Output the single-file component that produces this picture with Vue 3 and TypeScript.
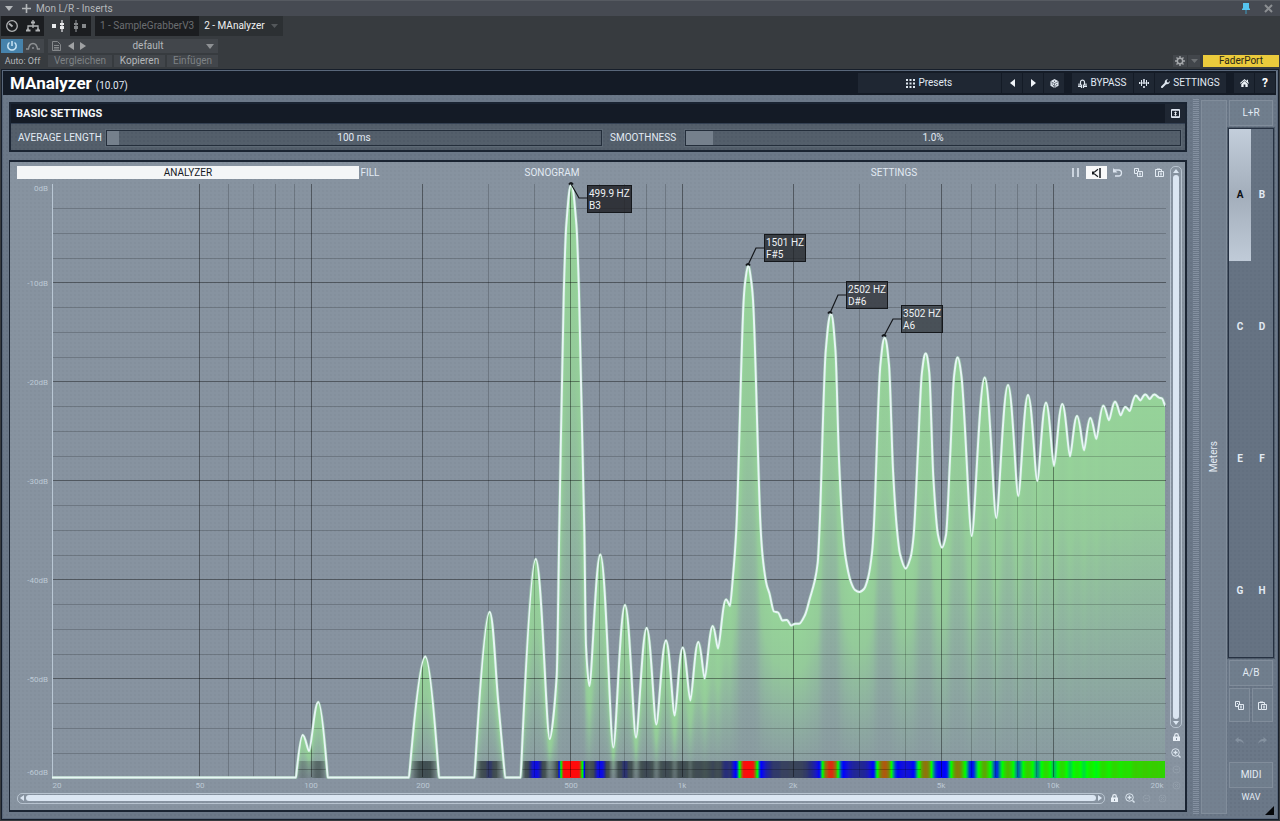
<script setup lang="ts">
import { ref } from 'vue'

type Point = [number, number]

const LEFT = 52
const TOP = 184
const WIDTH = 1114
const HEIGHT = 594
const BOTTOM = TOP + HEIGHT
const FLOOR = 777.5

const tabNames = ['ANALYZER', 'SONOGRAM', 'SETTINGS']
const activeTab = ref('ANALYZER')
const banks = ['A', 'B', 'C', 'D', 'E', 'F', 'G', 'H']
const activeBank = ref('A')
const preset = ref('default')

const sliders = ref([
  { id: 'avg', label: 'AVERAGE LENGTH', text: '100 ms', value: 24, fill: 24 },
  { id: 'smooth', label: 'SMOOTHNESS', text: '1.0%', value: 54, fill: 54 },
])

const xOf = (hz: number) => 311 + Math.log10(hz / 100) * 371.2
const yOf = (db: number) => TOP - db * 9.9
const pctX = (x: number) => ((x - LEFT) / WIDTH) * 100 + '%'
const pctY = (y: number) => ((y - TOP) / HEIGHT) * 100 + '%'

const majorHz = [50, 100, 200, 500, 1000, 2000, 5000, 10000]
const minorHz = [60, 70, 80, 90, 300, 400, 600, 700, 800, 900, 3000, 4000, 6000, 7000, 8000, 9000]
const majorDb = [-10, -20, -30, -40, -50]
const minorDb: number[] = []
for (let d = -2.5; d > -60; d -= 2.5) if (d % 10 !== 0) minorDb.push(d)
const lineX = (hz: number) => Math.floor(xOf(hz)) + 0.5

const hzLabels = [
  { x: 57, text: '20' }, { x: 200, text: '50' }, { x: 311, text: '100' }, { x: 423, text: '200' },
  { x: 571, text: '500' }, { x: 682, text: '1k' }, { x: 793, text: '2k' }, { x: 941, text: '5k' },
  { x: 1053, text: '10k' }, { x: 1157, text: '20k' },
]
const dbLabels = [
  { y: 189, text: '0dB' }, { y: 284, text: '-10dB' }, { y: 383, text: '-20dB' }, { y: 482, text: '-30dB' },
  { y: 581, text: '-40dB' }, { y: 680, text: '-50dB' }, { y: 773, text: '-60dB' },
]

const callouts = [
  { x: 587, y: 185, hz: '499.9 HZ', note: 'B3', line: 'M571 184L579 198H587', alpha: 0.82 },
  { x: 764, y: 234, hz: '1501 HZ', note: 'F#5', line: 'M748 265L756 248H764', alpha: 0.74 },
  { x: 846, y: 281, hz: '2502 HZ', note: 'D#6', line: 'M830 313L838 295H846', alpha: 0.66 },
  { x: 901, y: 305, hz: '3502 HZ', note: 'A6', line: 'M884 336L893 319H901', alpha: 0.58 },
]

const spectrum: Point[] = [
  [52, FLOOR], [296, FLOOR], [302.7, 735], [309, 751], [318.3, 702], [327.7, FLOOR],
  [409, FLOOR], [425.3, 656.5], [439, FLOOR], [474.5, FLOOR], [489.6, 612], [498.3, 703], [505, FLOOR],
  [520.7, FLOOR], [535.7, 559], [549.7, 739], [556.7, 676], [559.3, 530], [563.8, 293], [566.3, 225], [571.2, 185],
  [576.4, 225], [579, 293], [584.3, 530], [586, 646], [589.3, 686], [600.3, 554.5], [613.3, 747.5], [625, 605],
  [636, 737.5], [646.7, 628], [656.3, 724.5], [666, 640.5], [674.7, 715.5], [682.7, 647.5],
  [690.3, 700.5], [698.3, 642], [704.7, 678.5], [712.7, 626], [718, 648.5], [726, 599.5], [730, 606],
  [732.7, 580], [736.3, 530], [743.7, 300], [745.3, 281], [748.3, 266], [751.2, 281], [753, 300],
  [760.7, 530], [763.3, 563],
  [766.7, 585], [769.3, 593], [774, 611.5], [778, 612.5], [782.3, 620.5], [786.7, 620], [791, 625.5],
  [795.3, 623.8], [799, 623.7], [805, 615], [810, 598], [814.7, 581], [817.7, 563], [819.5, 530],
  [825.8, 350], [831, 314], [835.4, 350], [839, 460], [842.7, 530], [845.5, 557], [850.7, 581.5],
  [855, 590], [859.3, 592], [864, 589], [868.3, 577], [872, 553], [873.7, 530], [880.4, 365], [884.7, 338],
  [889, 365], [893, 470], [897, 530], [900, 554], [905.7, 568.5], [910.7, 557], [913.7, 535],
  [918, 450], [922, 372], [925.7, 353.5], [929.2, 372], [933.3, 477], [938, 535], [942, 547.5], [946, 535],
  [950, 460], [954.2, 375], [957.7, 357.5], [961.3, 375],
  [971.7, 536], [984.7, 377.5], [996.3, 518], [1008, 385], [1018.3, 496], [1028, 395],
  [1037.3, 481], [1046, 402.7], [1054, 466], [1062.3, 404], [1070, 456.3], [1077, 416], [1084, 450.3],
  [1090.3, 418], [1096.3, 439], [1103.3, 405.7], [1109, 420.3], [1115, 401.7], [1120.7, 415.3],
  [1125.3, 407], [1129.7, 411], [1135.7, 395.5], [1140.3, 400.5], [1145.3, 394.5], [1149.7, 399],
  [1154.3, 394.5], [1159, 397.7], [1162, 398.5], [1165, 405.5],
]

/* Horizontal tangents at the extrema, harmonic-mean slopes elsewhere. */
function tangents(pts: Point[]): { slope: number; reach: number }[] {
  return pts.map((p, i) => {
    const a = pts[i - 1]
    const b = pts[i + 1]
    if (!a || !b) return { slope: 0, reach: 0.1 }
    const s1 = (p[1] - a[1]) / (p[0] - a[0])
    const s2 = (b[1] - p[1]) / (b[0] - p[0])
    if (s1 * s2 > 0) return { slope: (2 * s1 * s2) / (s1 + s2), reach: 0.33 }
    if (p[1] >= FLOOR) return { slope: 0, reach: 0.02 }
    return { slope: 0, reach: s2 > 0 ? 0.42 : 0.24 }
  })
}

const marks = tangents(spectrum)
let curve = `M${spectrum[0][0]} ${spectrum[0][1]}`
const samples: Point[] = [spectrum[0]]
for (let i = 1; i < spectrum.length; i++) {
  const [x0, y0] = spectrum[i - 1]
  const [x3, y3] = spectrum[i]
  const dx = x3 - x0
  const h0 = dx * marks[i - 1].reach
  const h3 = dx * marks[i].reach
  const x1 = x0 + h0
  const y1 = y0 + h0 * marks[i - 1].slope
  const x2 = x3 - h3
  const y2 = y3 - h3 * marks[i].slope
  curve += `C${x1.toFixed(2)} ${y1.toFixed(2)} ${x2.toFixed(2)} ${y2.toFixed(2)} ${x3} ${y3}`
  for (let k = 1; k <= 30; k++) {
    const t = k / 30
    const u = 1 - t
    const w = [u * u * u, 3 * u * u * t, 3 * u * t * t, t * t * t]
    samples.push([w[0] * x0 + w[1] * x1 + w[2] * x2 + w[3] * x3, w[0] * y0 + w[1] * y1 + w[2] * y2 + w[3] * y3])
  }
}

function levelAt(x: number, from: number): { y: number; at: number } {
  let i = from
  while (i < samples.length - 2 && samples[i + 1][0] < x) i++
  const a = samples[i]
  const b = samples[i + 1]
  const t = b[0] === a[0] ? 0 : Math.min(1, (x - a[0]) / (b[0] - a[0]))
  return { y: a[1] + (b[1] - a[1]) * t, at: i }
}

const heat: [number, number, number, number, number][] = [
  [-60, 60, 70, 70, 0], [-56, 55, 65, 65, 0.3], [-50, 45, 58, 58, 0.75], [-45, 48, 58, 70, 0.85],
  [-42, 34, 40, 120, 0.95], [-39, 20, 20, 210, 1], [-36, 0, 0, 255, 1], [-33, 0, 60, 210, 1],
  [-30, 0, 150, 130, 1], [-27, 0, 220, 60, 1], [-25, 0, 255, 0, 1], [-21, 60, 200, 0, 1],
  [-18, 125, 130, 10, 1], [-15, 185, 80, 15, 1], [-12, 240, 20, 15, 1], [-8, 255, 10, 10, 1], [1, 255, 10, 10, 1],
]
function heatColor(db: number): string {
  let i = 0
  while (i < heat.length - 2 && heat[i + 1][0] < db) i++
  const a = heat[i]
  const b = heat[i + 1]
  const t = Math.max(0, Math.min(1, (db - a[0]) / (b[0] - a[0])))
  const m = (k: number) => a[k] + (b[k] - a[k]) * t
  return `rgba(${Math.round(m(1))},${Math.round(m(2))},${Math.round(m(3))},${m(4).toFixed(2)})`
}

const columns: { x: number; y: number; h: number; color: string }[] = []
let cursor = 0
for (let x = LEFT; x < 1165; x++) {
  const hit = levelAt(x + 0.5, cursor)
  cursor = hit.at
  if (hit.y < FLOOR - 1) {
    columns.push({ x, y: hit.y, h: BOTTOM - hit.y, color: heatColor((TOP - hit.y) / 9.9) })
  }
}
</script>

<template>
  <div class="window">
    <header class="host">
      <div class="titlebar">
        <svg class="t-arrow" width="8" height="5" viewBox="0 0 8 5"><path d="M0 0h8L4 5z" fill="#b4b7ba" /></svg>
        <svg width="9" height="9" viewBox="0 0 9 9"><path d="M4.500 0v9M0 4.500h9" stroke="#b4b7ba" stroke-width="1.600" /></svg>
        <span class="title">Mon L/R - Inserts</span>
        <svg class="pin" width="8" height="11" viewBox="0 0 8 11"><path d="M1 0h6v5l1 1v1H0V6l1-1z" fill="#55c3ee" /><path d="M4 7v4" stroke="#3f8fb0" stroke-width="1.200" /></svg>
        <button class="plain" aria-label="Close"><svg width="9" height="9" viewBox="0 0 9 9"><path d="M1 1l7 7M8 1L1 8" stroke="#8b8e92" stroke-width="2" /></svg></button>
      </div>
      <div class="row row1">
        <div class="pair dark">
          <button aria-label="Automation"><svg width="14" height="14" viewBox="0 0 14 14" fill="none" stroke="#b0b2b4" stroke-width="1.300"><circle cx="7" cy="7" r="5.300" /><path d="M7.500 7.500L4 4.500" stroke-width="2" /></svg></button>
          <button aria-label="Routing"><svg width="16" height="14" viewBox="0 0 16 14" fill="none" stroke="#b0b2b4" stroke-width="1.300"><path d="M8 1v6M3 11V7h10v4M8 7v2" /><path d="M6 3.500h4M1 11.500h4.500M10.500 11.500H15M3 9.500v3M13 9.500v3" stroke-width="1.800" /></svg></button>
        </div>
        <div class="pair">
          <button aria-label="Pre fader"><svg width="14" height="12" viewBox="0 0 14 12" fill="#e8eaec"><path d="M0 4h4v4H0zM8 3h4v2H8zM8 6h4v3H8z" /><path d="M10 0v12" stroke="#e8eaec" stroke-width="1.200" /></svg></button>
          <button class="dark" aria-label="Post fader"><svg width="14" height="12" viewBox="0 0 14 12" fill="#85888b"><path d="M9 4h4v4H9zM1 3h4v2H1zM1 6h4v3H1z" /><path d="M3 0v12" stroke="#85888b" stroke-width="1.200" /></svg></button>
        </div>
        <nav class="chain">
          <button class="chain-tab off">1 - SampleGrabberV3</button>
          <button class="chain-tab on">2 - MAnalyzer<svg width="7" height="4" viewBox="0 0 7 4"><path d="M0 0h7L3.500 4z" fill="#54585b" /></svg></button>
        </nav>
      </div>
      <div class="row row2">
        <div class="pair">
          <button class="power" aria-label="Activate"><svg width="12" height="12" viewBox="0 0 12 12" fill="none" stroke="#c9e4f4" stroke-width="1.500"><path d="M3.500 2.500a4.200 4.200 0 1 0 5 0M6 1v5" /></svg></button>
          <button class="soft" aria-label="Bypass curve"><svg width="14" height="8" viewBox="0 0 14 8" fill="none" stroke="#8e9194" stroke-width="1.400"><path d="M0 7h2.500C3 3 5 1.500 7 1.500S11 3 11.500 7H14" /><circle cx="7" cy="6" r="1" fill="#8e9194" stroke="none" /></svg></button>
        </div>
        <div class="preset">
          <button class="soft file" aria-label="Preset file"><svg width="9" height="10" viewBox="0 0 9 10" fill="none" stroke="#85888b"><path d="M.5.5h5l3 3v6h-8zM2 4.500h5M2 6.500h5M2 8h5" /></svg></button>
          <button class="soft arrows" aria-label="Previous and next preset"><svg width="18" height="8" viewBox="0 0 18 8" fill="#a0a2a4"><path d="M6 0v8L0 4zM12 0v8l6-4z" /></svg></button>
          <div class="pick">
            <select v-model="preset" aria-label="Preset"><option>default</option></select>
            <svg width="8" height="5" viewBox="0 0 8 5"><path d="M0 0h8L4 5z" fill="#8e9194" /></svg>
          </div>
        </div>
      </div>
      <div class="row row3">
        <button class="auto">Auto: Off</button>
        <div class="preset edit">
          <button class="soft dim">Vergleichen</button>
          <button class="soft">Kopieren</button>
          <button class="soft dim">Einfügen</button>
        </div>
        <div class="fader">
          <button class="soft gear" aria-label="Options"><svg width="10" height="10" viewBox="0 0 10 10" fill="none" stroke="#a4a7aa"><circle cx="5" cy="5" r="2.700" stroke-width="1.500" /><path d="M5 0v2M5 8v2M0 5h2M8 5h2M1.500 1.500l1.300 1.300M7.200 7.200l1.300 1.300M8.500 1.500L7.200 2.800M2.800 7.200L1.500 8.500" stroke-width="1.400" /></svg></button>
          <button class="soft more" aria-label="More"><svg width="7" height="4" viewBox="0 0 7 4"><path d="M0 0h7L3.500 4z" fill="#6b6f72" /></svg></button>
          <button class="port">FaderPort</button>
        </div>
      </div>
    </header>

    <main class="plugin">
      <div class="head">
        <h1>MAnalyzer</h1><span class="version">(10.07)</span>
        <div class="tools">
          <button class="wide"><svg width="9" height="9" viewBox="0 0 9 9" fill="#dfe7f0"><path d="M0 0h2v2H0zM3.500 0h2v2h-2zM7 0h2v2H7zM0 3.500h2v2H0zM3.500 3.500h2v2h-2zM7 3.500h2v2H7zM0 7h2v2H0zM3.500 7h2v2h-2zM7 7h2v2H7z" /></svg>Presets</button>
          <button class="sq" aria-label="Previous"><svg width="5" height="8" viewBox="0 0 5 8"><path d="M5 0v8L0 4z" fill="#f0f4f8" /></svg></button>
          <button class="sq" aria-label="Next"><svg width="5" height="8" viewBox="0 0 5 8"><path d="M0 0v8l5-4z" fill="#f0f4f8" /></svg></button>
          <button class="sq" aria-label="Random"><svg width="9" height="9" viewBox="0 0 10 10"><path d="M5 0l4.500 2.500v5L5 10 .5 7.500v-5z" fill="#dfe7f0" /><path d="M.5 2.700L5 5l4.500-2.300M5 5v5" fill="none" stroke="#1f2733" stroke-width=".6" /><path d="M4.500 2h1v1h-1zM2 5h1v1H2zM3.300 7h1v1h-1zM7 5.500h1v1H7zM6 7.200h1v1H6z" fill="#1f2733" /></svg></button>
          <i class="gap"></i>
          <button class="by"><svg width="9" height="9" viewBox="0 0 9 9" fill="none" stroke="#dfe7f0" stroke-width="1.200"><path d="M2.500 6.500V3C2.500 .5 6.500 .5 6.500 3v3.500M0 7.500h3.500M5.500 7.500H9M1 4.500v3M8 4.500v3M3.500 5.500v3.500M5.500 5.500v3.500" /></svg>BYPASS</button>
          <button class="sq" aria-label="Split"><svg width="10" height="9" viewBox="0 0 10 9"><path d="M5 0v5M5 7v2" stroke="#dfe7f0" stroke-width="1.600" /><path d="M2.500 1v6M7.500 1v6M.5 3v2M9.500 3v2M1 4h3M6 4h3" stroke="#dfe7f0" fill="none" /></svg></button>
          <button class="set"><svg width="9" height="9" viewBox="0 0 9 9"><path d="M1 8l4-4" stroke="#dfe7f0" stroke-width="2" stroke-linecap="round" /><path d="M4 4.500C3 2 5 0 7 .3L5.700 1.800l.3 1.400 1.400.2L8.800 2C9.200 4 7 6 4.700 5z" fill="#dfe7f0" /></svg>SETTINGS</button>
          <i class="gap"></i>
          <button class="sq" aria-label="Home"><svg width="9" height="8" viewBox="0 0 9 8" fill="#eef3f8"><path d="M4.500 0L0 4l.7.7L4.500 1.400l3.800 3.300L9 4 8 3.100V.7H6.800V2z" /><path d="M1.300 4.900L4.500 2l3.200 2.900V8H5.400V5.500H3.600V8H1.300z" /></svg></button>
          <button class="sq help">?</button>
        </div>
      </div>

      <div class="body">
        <div class="left">
          <section class="basic">
            <div class="basic-head">
              <h2>BASIC SETTINGS</h2>
              <button aria-label="Collapse"><svg width="9" height="9" viewBox="0 0 9 9"><path d="M.5.5h8v8h-8zM.5 1.300h8M.5 7.700h8" fill="none" stroke="#dfe7f0" /><path d="M4.500 2.200L6 4H3zM4.500 7L3 5.200h3zM4 3.500h1v2H4z" fill="#eef3f8" /></svg></button>
            </div>
            <div class="basic-row">
              <template v-for="s in sliders" :key="s.id">
                <label :for="s.id">{{ s.label }}</label>
                <div class="slider" :style="{ '--fill': s.fill / 10 + '%' }">
                  <input :id="s.id" v-model.number="s.value" type="range" min="0" max="1000" />
                  <output :for="s.id">{{ s.text }}</output>
                </div>
              </template>
            </div>
          </section>

          <section class="analyzer">
            <div class="tabs">
              <template v-for="(t, i) in tabNames" :key="t">
                <button class="tab" :class="{ active: activeTab === t }" @click="activeTab = t">{{ t }}</button>
                <button v-if="i === 0" class="fill">FILL</button>
              </template>
              <button class="tool" aria-label="Pause"><svg width="7" height="9" viewBox="0 0 7 9"><path d="M1 0v9M6 0v9" stroke="#e2eaf2" stroke-width="1.500" /></svg></button>
              <button class="tool active" aria-label="Hold"><svg width="9" height="10" viewBox="0 0 9 10"><path d="M8 0v10" stroke="#15191f" stroke-width="1.500" /><path d="M0 3.500h2.500v3H0z" fill="#15191f" /><path d="M2.500 4L6 1.200M2.500 6L6 8.800" fill="none" stroke="#15191f" stroke-width="1.100" /></svg></button>
              <button class="tool" aria-label="Reset"><svg width="10" height="9" viewBox="0 0 10 9"><path d="M1 2h4.500a3 3 0 0 1 0 6H2" fill="none" stroke="#dbe4ee" stroke-width="1.300" /><path d="M0 0v4.500h4.500z" fill="#dbe4ee" /></svg></button>
              <button class="tool" aria-label="Copy"><svg width="9" height="9" viewBox="0 0 9 9" fill="none" stroke="#e2eaf2"><path d="M3.500 5.500h-3v-5h4v3M2 2.500h1M3.500 3.500h5v5h-5zM5 5.200h2M5 6.800h2" /></svg></button>
              <button class="tool" aria-label="Paste"><svg width="9" height="9" viewBox="0 0 9 9" fill="none" stroke="#e2eaf2"><path d="M3 8.500H.5v-7h6V3M2 1h3M3.500 3.500h5v5h-5zM5 5.200h2M5 6.800h2" /></svg></button>
            </div>

            <div class="plot">
              <div class="db-scale">
                <span v-for="l in dbLabels" :key="l.text" :style="{ top: pctY(l.y) }">{{ l.text }}</span>
              </div>
              <div class="canvas">
                <svg class="graph" :viewBox="`${LEFT} ${TOP} ${WIDTH} ${HEIGHT}`" preserveAspectRatio="none">
                  <defs>
                    <linearGradient id="level" x1="0" y1="0" x2="0" y2="1">
                      <stop offset="0" stop-color="#98dc98" stop-opacity=".88" />
                      <stop offset=".3" stop-color="#98dc98" stop-opacity=".76" />
                      <stop offset=".6" stop-color="#98d8a0" stop-opacity=".47" />
                      <stop offset="1" stop-color="#98c8a8" stop-opacity=".12" />
                    </linearGradient>
                  </defs>
                  <g shape-rendering="crispEdges">
                    <rect v-for="c in columns" :key="c.x" :x="c.x" :y="c.y" width="1" :height="c.h" fill="url(#level)" />
                    <rect v-for="c in columns" :key="'h' + c.x" :x="c.x" :y="761" width="1" height="17" :fill="c.color" />
                  </g>
                  <g class="minor">
                    <line v-for="f in minorHz" :key="f" :x1="lineX(f)" :x2="lineX(f)" :y1="TOP" y2="777" />
                    <line v-for="d in minorDb" :key="d" :y1="Math.floor(yOf(d)) + 0.5" :y2="Math.floor(yOf(d)) + 0.5" :x1="LEFT" :x2="LEFT + WIDTH" />
                  </g>
                  <g class="major">
                    <line v-for="f in majorHz" :key="f" :x1="lineX(f)" :x2="lineX(f)" :y1="TOP" y2="777" />
                    <line v-for="d in majorDb" :key="d" :y1="Math.round(yOf(d)) - 0.5" :y2="Math.round(yOf(d)) - 0.5" :x1="LEFT" :x2="LEFT + WIDTH" />
                  </g>
                  <path d="M296 769.500h32M409 769.500h30M475 769.500h30M521 769.500h400" stroke="#000" stroke-opacity=".25" />
                  <path d="M52.500 184v594" stroke="#b9c7d4" />
                  <path :d="curve" fill="none" stroke="#a8e4b4" stroke-width="3.200" stroke-opacity=".5" stroke-linejoin="round" />
                  <path :d="curve" fill="none" stroke="#e8f5f6" stroke-width="1.900" stroke-linejoin="round" />
                  <g v-for="c in callouts" :key="c.hz" fill="none" stroke="#14171b">
                    <path :d="c.line" stroke-width="1.200" />
                    <path :d="c.line.split('L')[0] + 'm-2 .5q2-3 4 0'" stroke-width="1.800" />
                  </g>
                </svg>
                <div v-for="c in callouts" :key="c.hz" class="callout" :style="{ left: pctX(c.x), top: pctY(c.y), '--alpha': c.alpha }">
                  <span>{{ c.hz }}</span><span>{{ c.note }}</span>
                </div>
              </div>
            </div>
            <div class="hz-scale">
              <span v-for="l in hzLabels" :key="l.text" :style="{ left: pctX(l.x) }">{{ l.text }}</span>
            </div>

            <div class="vbar">
              <div class="scroll vertical"><i class="tip"></i><b class="thumb"></b><i class="tip end"></i></div>
              <button class="mini" aria-label="Lock level range"><svg width="7" height="8" viewBox="0 0 7 8"><path d="M1.700 4V2.500a1.800 1.800 0 0 1 3.600 0V4" fill="none" stroke="#e8eff6" stroke-width="1.200" /><path d="M0 3.500h7V8H0zM3 5v2h1V5z" fill="#e8eff6" fill-rule="evenodd" /></svg></button>
              <button class="mini" aria-label="Zoom level"><svg width="10" height="10" viewBox="0 0 10 10" fill="none" stroke="#dbe5ee"><circle cx="4.500" cy="4.500" r="3.800" /><path d="M2.500 4.500h4M4.500 2.500v4" stroke-width="1.300" /><path d="M7.500 7.500L9.500 9.500" stroke-width="1.400" /></svg></button>
              <button class="mini faint" aria-label="Zoom out level"><svg width="9" height="9" viewBox="0 0 9 9" fill="none" stroke="#dbe5ee"><circle cx="4.500" cy="4.500" r="3.500" /><path d="M3 4.500h3" /></svg></button>
              <button class="mini faint" aria-label="Reset level zoom"><svg width="9" height="9" viewBox="0 0 9 9" fill="none" stroke="#dbe5ee"><circle cx="4.500" cy="4.500" r="3.500" /><path d="M3 3l3 3M6 3L3 6" /></svg></button>
            </div>

            <div class="hbar">
              <div class="scroll horizontal"><i class="tip"></i><b class="thumb"></b><i class="tip end"></i></div>
              <button class="mini" aria-label="Lock frequency range"><svg width="7" height="8" viewBox="0 0 7 8"><path d="M1.700 4V2.500a1.800 1.800 0 0 1 3.600 0V4" fill="none" stroke="#e8eff6" stroke-width="1.200" /><path d="M0 3.500h7V8H0zM3 5v2h1V5z" fill="#e8eff6" fill-rule="evenodd" /></svg></button>
              <button class="mini" aria-label="Zoom frequency"><svg width="10" height="10" viewBox="0 0 10 10" fill="none" stroke="#dbe5ee"><circle cx="4.500" cy="4.500" r="3.800" /><path d="M2.500 4.500h4M4.500 2.500v4" stroke-width="1.300" /><path d="M7.500 7.500L9.500 9.500" stroke-width="1.400" /></svg></button>
              <button class="mini faint" aria-label="Zoom out frequency"><svg width="9" height="9" viewBox="0 0 9 9" fill="none" stroke="#dbe5ee"><circle cx="4.500" cy="4.500" r="3.500" /><path d="M3 4.500h3" /></svg></button>
              <button class="mini faint" aria-label="Reset frequency zoom"><svg width="9" height="9" viewBox="0 0 9 9" fill="none" stroke="#dbe5ee"><circle cx="4.500" cy="4.500" r="3.500" /><path d="M3 3l3 3M6 3L3 6" /></svg></button>
            </div>
          </section>
        </div>

        <div class="grip"></div>
        <button class="meters"><span>Meters</span></button>

        <aside class="side">
          <button class="box tall">L+R</button>
          <div class="banks">
            <button v-for="b in banks" :key="b" :class="{ active: b === activeBank }" @click="activeBank = b">{{ b }}</button>
          </div>
          <button class="box tall">A/B</button>
          <div class="duo">
            <button class="box" aria-label="Copy settings"><svg width="9" height="9" viewBox="0 0 9 9" fill="none" stroke="#e2eaf2"><path d="M3.500 5.500h-3v-5h4v3M2 2.500h1M3.500 3.500h5v5h-5zM5 5.200h2M5 6.800h2" /></svg></button>
            <button class="box" aria-label="Paste settings"><svg width="9" height="9" viewBox="0 0 9 9" fill="none" stroke="#e2eaf2"><path d="M3 8.500H.5v-7h6V3M2 1h3M3.500 3.500h5v5h-5zM5 5.200h2M5 6.800h2" /></svg></button>
          </div>
          <div class="history">
            <button aria-label="Undo"><svg width="9" height="7" viewBox="0 0 9 7"><path d="M0 3l3.500-3v2Q8 2 9 7 7 4 3.500 4v2z" fill="#8592a0" /></svg></button>
            <button aria-label="Redo"><svg width="9" height="7" viewBox="0 0 9 7"><path d="M9 3L5.500 0v2Q1 2 0 7 2 4 5.500 4v2z" fill="#8592a0" /></svg></button>
          </div>
          <button class="box tall">MIDI</button>
          <button class="wav">WAV</button>
          <svg class="corner" width="9" height="9" viewBox="0 0 9 9"><path d="M9 0v9H0z" fill="#05070a" /></svg>
        </aside>
      </div>
    </main>
  </div>
</template>

<style>
body {
  margin: 0;
  background: #373b3f;
}
</style>

<style scoped>
* {
  box-sizing: border-box;
}
button,
select {
  margin: 0;
  padding: 0;
  border: 0;
  background: none;
  color: inherit;
  font: inherit;
  display: flex;
  align-items: center;
  justify-content: center;
  white-space: nowrap;
}
svg {
  display: block;
  flex: none;
}
.window {
  min-height: 100vh;
  display: flex;
  flex-direction: column;
  background: #373b3f;
  font: 10px/12px Roboto, sans-serif;
  color: #e2eaf3;
}

/* host strip */
.host {
  color: #b4b7ba;
  padding-bottom: 2px;
}
.titlebar {
  height: 16px;
  background: #464a52;
  border-top: 1px solid #565a61;
  display: flex;
  align-items: center;
  padding: 0 7px 0 5px;
}
.t-arrow {
  margin-right: 9px;
}
.title {
  margin-left: 5px;
}
.pin {
  margin: 0 14px 0 auto;
}
.row {
  display: flex;
}
.row1 {
  height: 20px;
  margin-bottom: 3px;
}
.row2 {
  height: 14px;
  margin-bottom: 2px;
}
.row3 {
  height: 12px;
}
.pair {
  display: flex;
  width: 43px;
  margin: 0 4px 0 1px;
}
.pair button {
  flex: 1;
}
.dark {
  background: #1b1d20;
}
.pair + .pair {
  margin-left: 0;
}
.chain {
  display: flex;
}
.chain-tab {
  padding: 0 5px;
}
.chain-tab.off {
  background: #1b1d20;
  color: #6b6e71;
}
.chain-tab.on {
  background: #2c3033;
  color: #f0f1f2;
  gap: 6px;
}
.power {
  background: #4682ab;
}
.soft {
  background: #42464b;
}
.preset {
  display: flex;
  width: 170px;
}
.file {
  width: 16px;
}
.arrows {
  width: 26px;
}
.pick {
  flex: 1;
  display: flex;
  align-items: center;
  background: #42464b;
  padding-right: 4px;
}
.pick select {
  flex: 1;
  height: 14px;
  appearance: none;
  text-align: center;
  text-align-last: center;
}
.auto {
  width: 43px;
  margin: 0 4px 0 1px;
  font-size: 9px;
}
.edit {
  gap: 2px;
}
.edit button {
  flex: 1 1 auto;
}
.dim {
  color: #7d8184;
}
.fader {
  margin: 0 1px 0 auto;
  display: flex;
  gap: 1px;
}
.gear {
  width: 14px;
}
.more {
  width: 12px;
}
.port {
  width: 76px;
  margin-left: 2px;
  background: #ebcb3c;
  color: #2a2718;
}

/* plugin frame */
.plugin {
  flex: 1;
  display: flex;
  flex-direction: column;
  margin: 0 1px 1px;
  border: 1px solid #161e2a;
  background: #6b7888 radial-gradient(circle at 1px 1px, rgba(40, 50, 65, 0.22) 0, transparent 1px) 0 0 / 4px 4px;
  box-shadow: inset 0 0 0 1px #59677a;
}
.head {
  height: 24px;
  margin: 1px 2px 0 1px;
  padding: 0 1px 0 7px;
  background: #141b26;
  display: flex;
  align-items: center;
}
h1 {
  margin: 0 4px 0 0;
  font: bold 17px/20px Roboto, sans-serif;
  color: #fff;
}
.version {
  font-size: 10px;
  padding-top: 6px;
}
.tools {
  margin-left: auto;
  display: flex;
  gap: 1px;
  height: 20px;
  width: 33%;
}
.tools button {
  background: #1f2733;
  gap: 3px;
}
.tools .wide {
  flex: 1;
}
.sq {
  width: 20px;
}
.by {
  width: 61px;
}
.set {
  width: 71px;
}
.gap {
  width: 6px;
}
.help {
  font-size: 12px;
  font-weight: bold;
  color: #fff;
}
.body {
  flex: 1;
  display: flex;
  padding: 4px 4px 4px 7px;
}
.left {
  flex: 1;
  display: flex;
  flex-direction: column;
  padding: 3px 0;
  min-width: 0;
}

/* basic settings */
.basic {
  border: 2px solid #1a2432;
  background: #545f6b radial-gradient(circle at 1px 1px, rgba(20, 30, 45, 0.2) 0, transparent 1px) 0 0 / 4px 4px;
  margin-bottom: 8px;
}
.basic-head {
  height: 20px;
  background: #141b26;
  border-bottom: 1px solid #334052;
  display: flex;
  justify-content: space-between;
  padding-left: 5px;
}
h2 {
  margin: 0;
  font: bold 11px/20px Roboto, sans-serif;
  color: #f4f7fa;
}
.basic-head button {
  width: 20px;
  background: #1f2733;
}
.basic-row {
  display: grid;
  grid-template-columns: 80px 1fr 67px 1fr;
  align-items: center;
  column-gap: 8px;
  height: 26px;
  padding: 1px 4px 0 7px;
  white-space: nowrap;
}
.slider {
  position: relative;
}
.slider input {
  display: block;
  appearance: none;
  width: 100%;
  height: 16px;
  margin: 0;
  border: 1px solid #232d3a;
  outline: 1px solid rgba(130, 145, 160, 0.2);
  background: linear-gradient(90deg, #75808c var(--fill), transparent var(--fill));
}
.slider input::-webkit-slider-thumb {
  appearance: none;
  width: 2px;
  height: 14px;
  background: transparent;
}
.slider output {
  position: absolute;
  inset: 0;
  line-height: 16px;
  text-align: center;
  pointer-events: none;
}

/* analyzer */
.analyzer {
  flex: 1;
  display: grid;
  grid-template-columns: 1fr 12px;
  grid-template-rows: 13px 1fr 14px 12px;
  column-gap: 4px;
  padding: 4px 3px 6px 7px;
  border: 2px solid #1a2432;
  border-left-width: 1px;
  background: #8793a0 radial-gradient(circle at 1px 1px, rgba(60, 75, 95, 0.16) 0, transparent 1px) 0 0 / 4px 4px;
}
.tabs {
  display: flex;
  margin-right: -4px;
}
.tab {
  flex: 1;
}
.tab.active {
  background: #f4f6f7;
  color: #15191f;
}
.fill {
  width: 22px;
}
.tool {
  width: 21px;
}
.tool.active {
  background: #f8f9fa;
}
.plot {
  display: grid;
  grid-template-columns: 35px 1fr;
  padding-top: 5px;
}
.db-scale {
  position: relative;
  color: #bdc9d5;
  font-size: 8px;
}
.db-scale span {
  position: absolute;
  right: 4px;
  transform: translateY(-50%);
}
.canvas {
  position: relative;
}
.graph {
  position: absolute;
  inset: 0;
  width: 100%;
  height: 100%;
  overflow: visible;
}
.minor {
  stroke: #000;
  stroke-opacity: 0.19;
}
.major {
  stroke: #000;
  stroke-opacity: 0.4;
}
.callout {
  position: absolute;
  height: 28px;
  padding: 2px 1px 1px;
  border: 1px solid #15181c;
  background: rgba(30, 32, 36, var(--alpha));
  color: #eef1f4;
  display: grid;
  white-space: nowrap;
}
.hz-scale {
  position: relative;
  margin-left: 35px;
  color: #bdc9d5;
  font-size: 8px;
}
.hz-scale span {
  position: absolute;
  top: 2px;
  transform: translateX(-50%);
}
.vbar {
  grid-column: 2;
  grid-row: 1 / 5;
  display: flex;
  flex-direction: column;
  align-items: center;
}
.hbar {
  grid-column: 1;
  grid-row: 4;
  display: flex;
  align-items: center;
  margin-right: -4px;
}
.scroll {
  flex: 1;
  display: flex;
  align-items: center;
  justify-content: center;
  border: 1px solid rgba(215, 227, 238, 0.6);
  border-radius: 5px;
}
.horizontal {
  height: 11px;
  margin-right: 1px;
  padding: 0 2px;
  gap: 2px;
}
.vertical {
  width: 12px;
  flex-direction: column;
  padding: 2px 0;
  gap: 2px;
  margin-bottom: 1px;
}
.thumb {
  flex: 1;
  background: #dbe6f2;
  border-radius: 3px;
}
.horizontal .thumb {
  height: 6px;
}
.vertical .thumb {
  width: 6px;
}
.tip {
  background: #dbe6f2;
}
.horizontal .tip {
  width: 4px;
  height: 6px;
  clip-path: polygon(100% 0, 100% 100%, 0 50%);
}
.horizontal .tip.end {
  clip-path: polygon(0 0, 0 100%, 100% 50%);
}
.vertical .tip {
  width: 6px;
  height: 4px;
  clip-path: polygon(0 100%, 100% 100%, 50% 0);
}
.vertical .tip.end {
  clip-path: polygon(0 0, 100% 0, 50% 100%);
}
.mini {
  width: 16px;
  height: 16px;
}
.vbar .mini:last-child {
  margin-bottom: 11px;
}
.faint {
  opacity: 0.15;
}

/* right side */
.grip {
  width: 6px;
  margin: 0 2px 0 6px;
  background: repeating-linear-gradient(180deg, #8490a0 0 1px, transparent 1px 2px);
}
.meters {
  width: 26px;
  margin: 1px 1px 1px 0;
  border: 1px solid #818d9b;
  background: rgba(125, 138, 152, 0.5);
}
.meters span {
  writing-mode: vertical-rl;
  rotate: 180deg;
  font-size: 10px;
}
.side {
  width: 46px;
  margin-top: 1px;
  display: flex;
  flex-direction: column;
}
.box {
  border: 1px solid #818d9b;
  background: rgba(118, 131, 146, 0.5);
}
.tall {
  flex: none;
  height: 26px;
  margin: 0 1px;
}
.banks {
  flex: 1;
  display: grid;
  grid-template-columns: 1fr 1fr;
  grid-auto-rows: 1fr;
  margin: 2px 0;
  border: 1px solid #263142;
  background: rgba(95, 108, 125, 0.4);
  font-weight: bold;
  outline: 1px solid rgba(30, 40, 55, 0.35);
}
.banks .active {
  background: linear-gradient(#c3cedb, #a3aebb 50%, #c0cbd8);
  color: #0d1015;
}
.duo {
  display: grid;
  grid-template-columns: 1fr 1fr;
  gap: 2px;
  height: 34px;
  margin: 2px 1px 0;
}
.history {
  display: grid;
  grid-template-columns: 1fr 1fr;
  height: 40px;
  padding-bottom: 4px;
}
.wav {
  height: 18px;
  font-size: 9px;
}
.corner {
  align-self: flex-end;
}
</style>
